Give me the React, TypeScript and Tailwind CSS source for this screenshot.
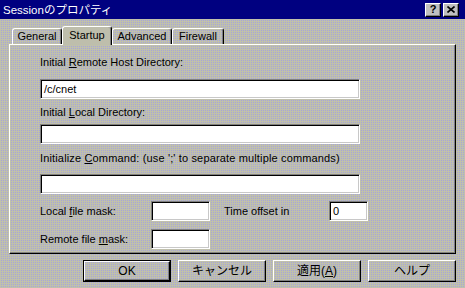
import React from "react";

const FONT = "font-['Liberation_Sans','Noto_Sans_CJK_JP',sans-serif]";

// Win95 style sunken edit box
function Field({ value = "", className = "" }: { value?: string; className?: string }) {
  return (
    <div
      className={`h-[20px] bg-white border border-t-[#808080] border-l-[#808080] border-r-white border-b-white shadow-[inset_1px_1px_0_#000,inset_-1px_-1px_0_#c8c8c8] pl-[3px] flex items-center text-[11px] text-black ${className}`}
    >
      {value}
    </div>
  );
}

function Tab({ label, width, active = false }: { label: string; width: string; active?: boolean }) {
  if (active) {
    return (
      <div className={`relative z-10 -mb-[1px] h-[19px] ${width} flex items-start justify-center pt-[2px] rounded-t-[3px] border-t border-l border-r border-t-white border-l-white border-r-black shadow-[inset_-1px_0_0_#808080] bg-[#bebeac]`}>
        {label}
      </div>
    );
  }
  return (
    <div className={`h-[16px] ${width} flex items-center justify-center rounded-t-[3px] border-t border-l border-r border-t-white border-l-white border-r-black shadow-[inset_-1px_0_0_#808080]`}>
      {label}
    </div>
  );
}

function Button({ children, isDefault = false }: { children: React.ReactNode; isDefault?: boolean }) {
  return (
    <div className={`w-[88px] h-[22px] ${isDefault ? "border border-black" : ""}`}>
      <div className="w-full h-full flex items-center justify-center border border-t-white border-l-white border-r-black border-b-black shadow-[inset_-1px_-1px_0_#808080] text-[12px]">
        {children}
      </div>
    </div>
  );
}

export default function App() {
  return (
    <div
      className={`w-[465px] h-[288px] overflow-hidden text-black text-[11px] leading-[13px] ${FONT} bg-[#bebeac] bg-[conic-gradient(#a6a6d8_0_25%,#c0c0ac_0)] bg-[length:2px_2px]`}
    >
      {/* title bar */}
      <div className="h-[19px] bg-[#000080] flex items-center justify-between pl-[3px] pr-[6px]">
        <span className="text-white text-[11.5px] leading-[14px]">Sessionのプロパティ</span>
        <div className="flex gap-[2px]">
          <div className="w-[16px] h-[14px] bg-[#c0c0c0] border border-t-white border-l-white border-r-black border-b-black shadow-[inset_-1px_-1px_0_#808080] flex items-center justify-center text-[11px] font-bold leading-none">
            ?
          </div>
          <div className="w-[16px] h-[14px] bg-[#c0c0c0] border border-t-white border-l-white border-r-black border-b-black shadow-[inset_-1px_-1px_0_#808080] flex items-center justify-center">
            <svg width="8" height="7" viewBox="0 0 8 7">
              <path d="M0.5 0.5L7.5 6.5M7.5 0.5L0.5 6.5" stroke="#000" strokeWidth="1.6" />
            </svg>
          </div>
        </div>
      </div>

      {/* tabs */}
      <div className="mt-[7px] h-[18px] pl-[12px] flex items-end">
        <Tab label="General" width="w-[50px]" />
        <Tab label="Startup" width="w-[50px]" active />
        <Tab label="Advanced" width="w-[60px]" />
        <Tab label="Firewall" width="w-[52px]" />
      </div>

      {/* panel */}
      <div className="ml-[9px] w-[447px] h-[210px] border border-t-white border-l-white border-r-black border-b-black shadow-[inset_-1px_-1px_0_#808080] pl-[30px] flex flex-col">
        <div className="mt-[11px]">
          Initial <u>R</u>emote Host Directory:
        </div>
        <Field value="/c/cnet" className="mt-[10px] w-[320px] h-[19px]" />
        <div className="mt-[7px]">
          Initial <u>L</u>ocal Directory:
        </div>
        <Field className="mt-[5px] w-[320px] h-[19px]" />
        <div className="mt-[8px] tracking-[0.15px]">
          Initialize <u>C</u>ommand: (use ';' to separate multiple commands)
        </div>
        <Field className="mt-[9px] w-[320px] h-[19px]" />
        <div className="mt-[7px] flex items-center">
          <span className="w-[111px]">
            Local <u>f</u>ile mask:
          </span>
          <Field className="w-[59px]" />
          <span className="ml-[14px] w-[105px]">Time offset in</span>
          <Field value="0" className="w-[39px]" />
        </div>
        <div className="mt-[8px] flex items-center">
          <span className="w-[111px]">
            Remote file <u>m</u>ask:
          </span>
          <Field className="w-[59px]" />
        </div>
      </div>

      {/* dialog buttons */}
      <div className="mt-[6px] pr-[9px] flex justify-end gap-[7px]">
        <Button isDefault>OK</Button>
        <Button>キャンセル</Button>
        <Button>
          適用(<u>A</u>)
        </Button>
        <Button>ヘルプ</Button>
      </div>
    </div>
  );
}
